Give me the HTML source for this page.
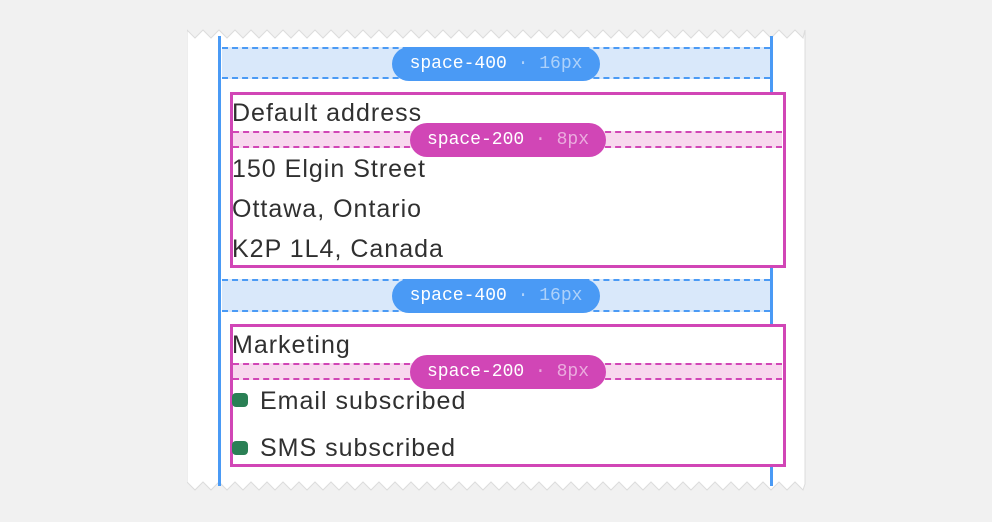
<!DOCTYPE html>
<html><head><style>
*{margin:0;padding:0;box-sizing:border-box}
body{width:992px;height:522px;background:#f1f1f1;position:relative;overflow:hidden;font-family:"Liberation Sans",sans-serif;color:#303030}
.abs{position:absolute}
.vline{position:absolute;width:3px;background:#4a9af5;top:36px;height:450px}
.band{position:absolute;left:222px;width:548px;background:#d9e8fa;border-top:2px dashed #4a9af5;border-bottom:2px dashed #4a9af5}
.pband{position:absolute;left:233px;width:549px;background:#f8d8ee;border-top:2px dashed #d146b6;border-bottom:2px dashed #d146b6}
.pill{position:absolute;height:34px;border-radius:17px;color:#fff;font-family:"Liberation Mono",monospace;font-size:18px;line-height:34px;text-align:center;white-space:nowrap}
.pill span{opacity:.55}
.blue{background:#4a9af5}
.pink{background:#d146b6}
.box{position:absolute;left:230px;width:556px;border:3px solid #d146b6;background:#fff}
.t{position:absolute;left:232px;font-size:25px;letter-spacing:1px;line-height:28px;white-space:nowrap}
.dot{position:absolute;left:232px;width:16px;height:14px;border-radius:4px;background:#2a8055}
</style></head><body>
<svg class="abs" style="left:187px;top:26px" width="619" height="466">
<polygon fill="#fff" stroke="#dcdcdc" stroke-width="1" points="0,4 8,12 16,4 24,12 32,4 40,12 48,4 56,12 64,4 72,12 80,4 88,12 96,4 104,12 112,4 120,12 128,4 136,12 144,4 152,12 160,4 168,12 176,4 184,12 192,4 200,12 208,4 216,12 224,4 232,12 240,4 248,12 256,4 264,12 272,4 280,12 288,4 296,12 304,4 312,12 320,4 328,12 336,4 344,12 352,4 360,12 368,4 376,12 384,4 392,12 400,4 408,12 416,4 424,12 432,4 440,12 448,4 456,12 464,4 472,12 480,4 488,12 496,4 504,12 512,4 520,12 528,4 536,12 544,4 552,12 560,4 568,12 576,4 584,12 592,4 600,12 608,4 616,12 618,4 618,458 616,464 608,456 600,464 592,456 584,464 576,456 568,464 560,456 552,464 544,456 536,464 528,456 520,464 512,456 504,464 496,456 488,464 480,456 472,464 464,456 456,464 448,456 440,464 432,456 424,464 416,456 408,464 400,456 392,464 384,456 376,464 368,456 360,464 352,456 344,464 336,456 328,464 320,456 312,464 304,456 296,464 288,456 280,464 272,456 264,464 256,456 248,464 240,456 232,464 224,456 216,464 208,456 200,464 192,456 184,464 176,456 168,464 160,456 152,464 144,456 136,464 128,456 120,464 112,456 104,464 96,456 88,464 80,456 72,464 64,456 56,464 48,456 40,464 32,456 24,464 16,456 8,464 0,456"/>
</svg>
<div class="vline" style="left:218px"></div>
<div class="vline" style="left:770px"></div>

<div class="band" style="top:47px;height:32px"></div>
<div class="pill blue" style="left:392px;top:47px;width:208px">space-400 <span>· 16px</span></div>

<div class="box" style="top:92px;height:176px"></div>
<div class="t" style="top:99px">Default address</div>
<div class="pband" style="top:131px;height:17px"></div>
<div class="pill pink" style="left:410px;top:123px;width:196px">space-200 <span>· 8px</span></div>
<div class="t" style="top:155px">150 Elgin Street</div>
<div class="t" style="top:195px">Ottawa, Ontario</div>
<div class="t" style="top:235px">K2P 1L4, Canada</div>

<div class="band" style="top:279px;height:33px"></div>
<div class="pill blue" style="left:392px;top:279px;width:208px">space-400 <span>· 16px</span></div>

<div class="box" style="top:324px;height:143px"></div>
<div class="t" style="top:331px">Marketing</div>
<div class="pband" style="top:363px;height:17px"></div>
<div class="pill pink" style="left:410px;top:355px;width:196px">space-200 <span>· 8px</span></div>
<div class="dot" style="top:393px"></div>
<div class="t" style="left:260px;top:387px">Email subscribed</div>
<div class="dot" style="top:441px"></div>
<div class="t" style="left:260px;top:434px">SMS subscribed</div>
</body></html>
